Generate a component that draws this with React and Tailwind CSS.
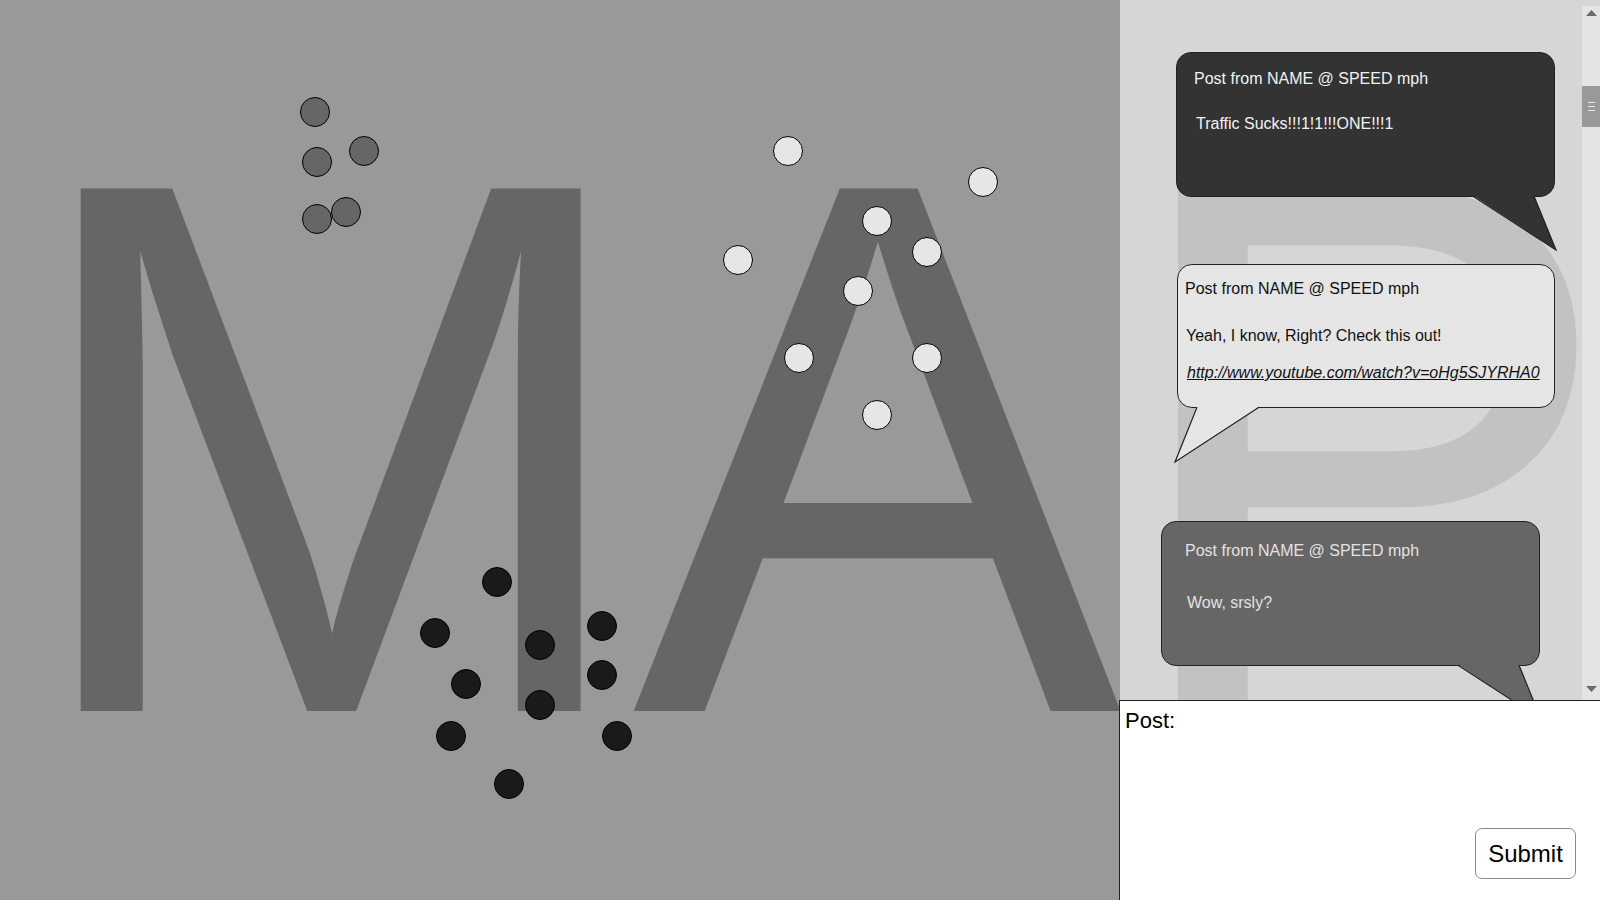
import React from "react";

const grayDots = [
  [315, 112],
  [363.7, 150.7],
  [317.3, 162.3],
  [346.3, 211.7],
  [317.3, 219.3],
];
const whiteDots = [
  [787.7, 151],
  [983, 181.7],
  [877, 220.7],
  [927, 251.7],
  [737.7, 260],
  [857.7, 290.7],
  [799.3, 357.7],
  [927, 357.7],
  [877, 414.7],
];
const blackDots = [
  [497, 582.3],
  [435.3, 633.3],
  [540.3, 645.3],
  [602, 626],
  [466.3, 684.3],
  [602, 674.7],
  [540.3, 705.3],
  [450.7, 736.3],
  [617.3, 736.3],
  [509.3, 784.3],
];

function Dot({ x, y, color }) {
  return (
    <div
      className={
        "absolute w-[30px] h-[30px] rounded-full border-[1.5px] border-black " +
        color
      }
      style={{ left: x - 15, top: y - 15 }}
    />
  );
}

function Tail({ points, line, fill }) {
  return (
    <svg
      className="absolute top-full left-0 overflow-visible"
      width="400"
      height="60"
      viewBox="0 0 400 60"
    >
      <polygon points={points} fill={fill} />
      <polyline
        points={line}
        fill="none"
        stroke="#222222"
        strokeWidth="1.2"
        strokeLinejoin="miter"
      />
    </svg>
  );
}

export default function App() {
  return (
    <div className="relative w-[1600px] h-[900px] overflow-hidden bg-[#999999] font-['Liberation_Sans',_Arial,_sans-serif]">
      {/* big background lettering */}
      <div className="absolute left-[27px] top-[94px] text-[729px] leading-none text-[#666666] whitespace-nowrap select-none">
        <span className="inline-block origin-[50%_617px] scale-x-[1.025] scale-y-[1.042]">M</span>
        <span className="inline-block origin-[50%_617px] scale-x-[1.007] scale-y-[1.042]">A</span>
        <span className="inline-block origin-[56px_617px] -translate-x-[3px] scale-x-[1.027] scale-y-[1.042]">P</span>
      </div>

      <div className="relative flex h-full">
        {/* map canvas */}
        <div className="relative w-[1120px] h-full shrink-0">
          {grayDots.map(([x, y], i) => (
            <Dot key={"g" + i} x={x} y={y} color="bg-[#666666]" />
          ))}
          {whiteDots.map(([x, y], i) => (
            <Dot key={"w" + i} x={x} y={y} color="bg-[#e6e6e6]" />
          ))}
          {blackDots.map(([x, y], i) => (
            <Dot key={"b" + i} x={x} y={y} color="bg-[#1a1a1a]" />
          ))}
        </div>

        {/* side panel */}
        <div className="flex flex-col w-[480px] h-full shrink-0">
          <div className="flex h-[700px] shrink-0 bg-white/60">
            {/* messages */}
            <div className="relative flex-1 h-full overflow-hidden flex flex-col items-start text-[16px] leading-[18px]">
              <div className="relative shrink-0 ml-[56px] mt-[52px] w-[379px] h-[145px] rounded-[15px] border border-[#222222] bg-[#333333] pt-[17px] pl-[17px] text-[#f2f2f2]">
                <div>Post from NAME @ SPEED mph</div>
                <div className="mt-[27px] ml-[2px]">Traffic Sucks!!!1!1!!!ONE!!!1</div>
                <Tail
                  points="296,-0.5 357,-0.5 379,54"
                  line="296,0.3 379,54 357,0.3"
                  fill="#333333"
                />
              </div>

              <div className="relative shrink-0 ml-[57px] mt-[67px] w-[378px] h-[144px] rounded-[15px] border border-[#222222] bg-[#e5e5e5] pt-[15px] pl-[7px] text-[#111111]">
                <div>Post from NAME @ SPEED mph</div>
                <div className="mt-[29px] ml-[1px]">Yeah, I know, Right? Check this out!</div>
                <div className="mt-[19px] ml-[2px] italic underline">
                  http://www.youtube.com/watch?v=oHg5SJYRHA0
                </div>
                <Tail
                  points="19,-0.5 81,-0.5 -3,55"
                  line="19,0.3 -3,55 81,0.3"
                  fill="#e5e5e5"
                />
              </div>

              <div className="relative shrink-0 ml-[41px] mt-[113px] w-[379px] h-[145px] rounded-[15px] border border-[#222222] bg-[#666666] pt-[20px] pl-[23px] text-[#e2e2e2]">
                <div>Post from NAME @ SPEED mph</div>
                <div className="mt-[34px] ml-[2px]">Wow, srsly?</div>
                <Tail
                  points="296,-0.5 357,-0.5 379,54"
                  line="296,0.3 379,54 357,0.3"
                  fill="#666666"
                />
              </div>
            </div>

            {/* scrollbar */}
            <div className="w-[18px] h-full pt-[6px] flex flex-col shrink-0">
              <div className="flex-1 bg-[#e4e4e4] flex flex-col items-center">
                <svg className="mt-[4px]" width="11" height="6" viewBox="0 0 11 6">
                  <polygon points="0,6 11,6 5.5,0" fill="#6a6a6a" />
                </svg>
                <div className="mt-[70px] w-full h-[41px] bg-[#999999] flex flex-col items-center justify-center gap-[3px]">
                  <div className="w-[7px] h-px bg-[#e8e8e8]" />
                  <div className="w-[7px] h-px bg-[#e8e8e8]" />
                  <div className="w-[7px] h-px bg-[#e8e8e8]" />
                </div>
                <div className="flex-1" />
                <svg className="mb-[8px]" width="11" height="6" viewBox="0 0 11 6">
                  <polygon points="0,0 11,0 5.5,6" fill="#6a6a6a" />
                </svg>
              </div>
            </div>
          </div>

          {/* post form */}
          <div className="-ml-px w-[482px] h-[201px] shrink-0 border border-[#222222] bg-white flex flex-col">
            <div className="pl-[5px] pt-[7px] text-[22px] leading-[26px] text-black">Post:</div>
            <div className="flex justify-end pr-[24px] mt-[94px]">
              <button className="w-[101px] h-[51px] rounded-[7px] border border-[#8a8a8a] bg-white text-[24px] leading-none text-black">
                Submit
              </button>
            </div>
          </div>
        </div>
      </div>
    </div>
  );
}
